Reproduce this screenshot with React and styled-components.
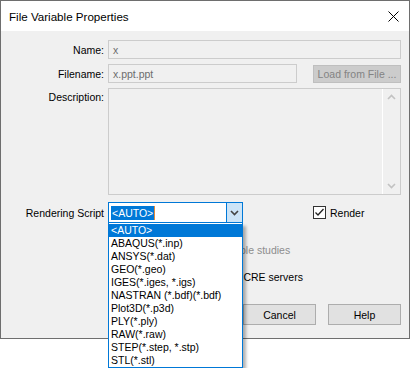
import React from 'react'
import styled, { createGlobalStyle } from 'styled-components'

const GlobalStyle = createGlobalStyle`
  html, body { margin: 0; padding: 0; background: #ffffff; min-height: 100%; }
  body { font-family: 'Liberation Sans', Arial, sans-serif; font-size: 10.5px; color: #000; }
  #root { min-height: 368px; }
`

const scripts = [
  '<AUTO>',
  'ABAQUS(*.inp)',
  'ANSYS(*.dat)',
  'GEO(*.geo)',
  'IGES(*.iges, *.igs)',
  'NASTRAN (*.bdf)(*.bdf)',
  'Plot3D(*.p3d)',
  'PLY(*.ply)',
  'RAW(*.raw)',
  'STEP(*.step, *.stp)',
  'STL(*.stl)',
]

const Dialog = styled.div`
  width: 410px;
  box-sizing: border-box;
  border: 1px solid #6e6e6e;
  background: #f0f0f0;
`

const TitleBar = styled.div`
  height: 30px;
  background: #ffffff;
  display: flex;
  align-items: center;
  justify-content: space-between;
  padding: 0 10px 0 8px;
`

const Title = styled.span`
  font-size: 11.6px;
  color: #000;
`

const Body = styled.div`
  display: flex;
  flex-direction: column;
  padding: 9px 8px 13px 0;
`

const Row = styled.div`
  display: grid;
  grid-template-columns: 103px 1fr;
  column-gap: 4px;
  margin-top: ${p => p.mt || 0}px;
`

const Label = styled.label`
  text-align: right;
  align-self: ${p => (p.top ? 'start' : 'center')};
  padding-top: ${p => (p.top ? '3px' : '0')};
  white-space: nowrap;
`

const Field = styled.div`
  grid-column: 2;
  display: flex;
  align-items: center;
  position: relative;
  height: ${p => p.h || 19}px;
`

const TextBox = styled.div`
  box-sizing: border-box;
  height: 100%;
  width: ${p => p.w || '100%'};
  border: 1px solid #cccccc;
  background: #f0f0f0;
  color: #6d6d6d;
  padding: 0 4px;
  display: flex;
  align-items: center;
`

const GrayButton = styled.div`
  box-sizing: border-box;
  margin-left: auto;
  width: 88px;
  height: 18px;
  background: #cccccc;
  border: 1px solid #bfbfbf;
  color: #838383;
  display: flex;
  align-items: center;
  justify-content: center;
`

const Memo = styled.div`
  box-sizing: border-box;
  width: 100%;
  height: 100%;
  border: 1px solid #cccccc;
  display: flex;
  justify-content: flex-end;
`

const ScrollTrack = styled.div`
  width: 17px;
  border-left: 1px solid #ffffff;
  display: flex;
  flex-direction: column;
  justify-content: space-between;
  align-items: center;
  padding: 5px 0;
`

const Combo = styled.div`
  box-sizing: border-box;
  width: 135px;
  height: 21px;
  border: 1px solid #0078d7;
  background: #ffffff;
  display: flex;
`

const ComboText = styled.div`
  flex: 1;
  display: flex;
  align-items: center;
  padding-left: 2px;
`

const Selected = styled.span`
  background: #0078d7;
  color: #ffffff;
  padding: 1px 1px;
  border-right: 1px solid #e08a3c;
`

const ComboButton = styled.div`
  width: 15px;
  background: #cce4f7;
  border-left: 1px solid #0078d7;
  display: flex;
  align-items: center;
  justify-content: center;
`

const List = styled.ul`
  position: absolute;
  left: 0;
  top: 21px;
  z-index: 5;
  box-sizing: border-box;
  width: 135px;
  margin: 0;
  padding: 1px 0 0;
  list-style: none;
  background: #ffffff;
  border: 1px solid #0078d7;
  border-top: none;
  box-shadow: 3px 3px 3px rgba(0, 0, 0, 0.3);
`

const Item = styled.li`
  height: 13px;
  line-height: 13px;
  padding-left: 2px;
  white-space: nowrap;
  background: ${p => (p.active ? '#0078d7' : 'transparent')};
  color: ${p => (p.active ? '#ffffff' : '#000000')};
`

const Check = styled.div`
  display: flex;
  align-items: center;
  gap: 4px;
  margin-left: ${p => p.ml || 0}px;
  color: ${p => (p.disabled ? '#8d8d8d' : '#000')};
  white-space: nowrap;
`

const Box = styled.span`
  box-sizing: border-box;
  width: 13px;
  height: 13px;
  border: 1px solid ${p => (p.disabled ? '#bcbcbc' : '#333333')};
  background: #ffffff;
  display: flex;
  align-items: center;
  justify-content: center;
`

const Buttons = styled.div`
  display: flex;
  justify-content: flex-end;
  gap: 12px;
  margin-top: ${p => p.mt || 0}px;
`

const Button = styled.div`
  box-sizing: border-box;
  width: 73px;
  height: 21px;
  background: #e1e1e1;
  border: 1px solid #adadad;
  display: flex;
  align-items: center;
  justify-content: center;
`

const Chevron = ({ up, color = '#c2c2c2' }) => (
  <svg width='9' height='6' viewBox='0 0 9 6'>
    <path d={up ? 'M1 5 L4.5 1.5 L8 5' : 'M1 1 L4.5 4.5 L8 1'} stroke={color} strokeWidth='1.6' fill='none' />
  </svg>
)

const Tick = () => (
  <svg width='11' height='11' viewBox='0 0 11 11'>
    <path d='M1.5 5.5 L4 8 L9.5 2' stroke='#222' strokeWidth='1.3' fill='none' />
  </svg>
)

const CloseIcon = () => (
  <svg width='11' height='11' viewBox='0 0 11 11'>
    <path d='M0.5 0.5 L10.5 10.5 M10.5 0.5 L0.5 10.5' stroke='#000' strokeWidth='1' fill='none' />
  </svg>
)

export default function App() {
  return (
    <>
      <GlobalStyle />
      <Dialog>
        <TitleBar>
          <Title>File Variable Properties</Title>
          <CloseIcon />
        </TitleBar>
        <Body>
          <Row>
            <Label>Name:</Label>
            <Field><TextBox>x</TextBox></Field>
          </Row>

          <Row mt={5}>
            <Label>Filename:</Label>
            <Field>
              <TextBox w='189px'>x.ppt.ppt</TextBox>
              <GrayButton>Load from File ...</GrayButton>
            </Field>
          </Row>

          <Row mt={5}>
            <Label top>Description:</Label>
            <Field h={107}>
              <Memo>
                <ScrollTrack>
                  <Chevron up />
                  <Chevron />
                </ScrollTrack>
              </Memo>
            </Field>
          </Row>

          <Row mt={7}>
            <Label>Rendering Script</Label>
            <Field h={21}>
              <Combo>
                <ComboText><Selected>&lt;AUTO&gt;</Selected></ComboText>
                <ComboButton><Chevron color='#444' /></ComboButton>
              </Combo>
              <Check ml={70}>
                <Box><Tick /></Box>
                <span>Render</span>
              </Check>
              <List>
                {scripts.map((s, i) => (
                  <Item key={s} active={i === 0}>{s}</Item>
                ))}
              </List>
            </Field>
          </Row>

          <Row mt={20}>
            <Field h={13}>
              <Check disabled>
                <Box disabled />
                <span>Use in variable and multiple studies</span>
              </Check>
            </Field>
          </Row>

          <Row mt={14}>
            <Field h={13}>
              <Check ml={63}>
                <Box />
                <span>Upload to HCRE servers</span>
              </Check>
            </Field>
          </Row>

          <Buttons mt={21}>
            <Button>OK</Button>
            <Button>Cancel</Button>
            <Button>Help</Button>
          </Buttons>
        </Body>
      </Dialog>
    </>
  )
}
